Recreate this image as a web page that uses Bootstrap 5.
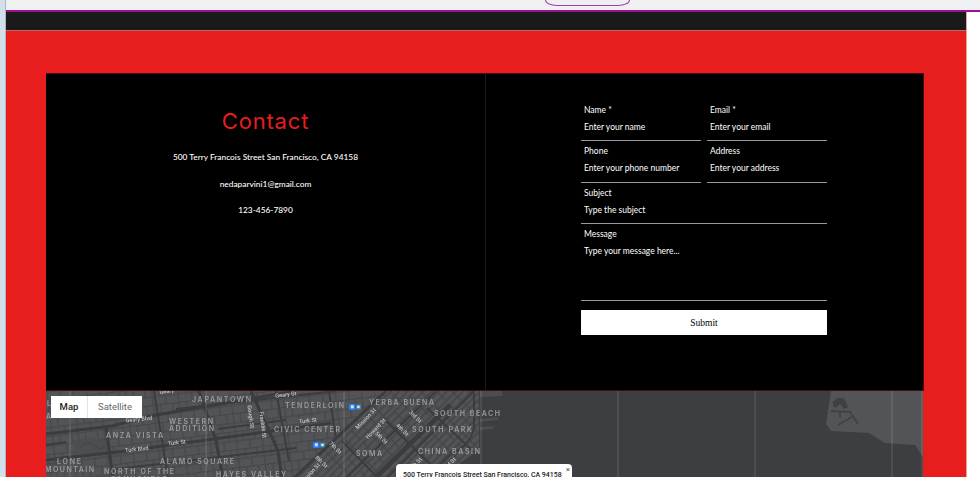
<!DOCTYPE html>
<html lang="en">
<head>
<meta charset="utf-8">
<meta name="viewport" content="width=device-width, initial-scale=1">
<title>Contact</title>
<link href="https://cdn.jsdelivr.net/npm/bootstrap@5.3.0/dist/css/bootstrap.min.css" rel="stylesheet">
<style>
html,body{height:100%;overflow:hidden}
body{font-family:Lato,"Open Sans",sans-serif;font-size:8.5px;line-height:12px;background:#fff;color:#fff}
.shell{height:477px;background:#fff}
.rail{width:6px;background:linear-gradient(90deg,#d3dfea 5px,#b3b5ba 5px)}
.topbar{height:12px;background:#eff0f2;border-bottom:2px solid #9a128f}
.pill{width:85px;height:6px;margin-left:539px;border:1px solid #a63c9f;border-top:0;border-radius:0 0 12px 12px/0 0 6px 6px}
.site{width:961px;background:#e81e1e;border-right:1px solid #f29c9c}
.strip{height:19px;background:#1a1a1a;border-bottom:1px solid #b96b6b}
.panel{width:878px;margin:42px 0 0 40px}
.pane-row{height:318px;background:#000;border:1px solid #500c0c;border-left-width:0}
.info{width:440px;border-right:1px solid #191919}
.info h1{font-family:Inter,sans-serif;font-size:22px;line-height:28px;color:#e81e1e;margin:33px 0 16px;font-weight:400;letter-spacing:.8px}
.info p{margin:0 0 14.5px;font-size:8.35px;font-weight:500}
.contact-form{width:246px;margin:28px 0 0 95px}
.field{height:39.4px;margin-bottom:2px;border-bottom:1px solid #999}
.pair{gap:6px}
.field label{display:block;height:12px;line-height:12px;padding:2px 3px 0}
.field input,.field textarea{display:block;width:100%;height:22px;padding:7px 3px 3px;border:0;border-radius:0;background:transparent;color:#fff;font-size:8.5px;line-height:12px;resize:none;overflow:hidden}
.field ::placeholder{color:#fff;opacity:1}
.message-field{height:75px}
.message-field textarea{height:50px}
.submit{height:25px;margin-top:9px;border-radius:0;background:#fff;color:#000;font:9.5px/26px "Liberation Serif",serif;padding:0;border:0}
.submit:hover{background:#eee}
.map{height:87px;width:877px}
.map svg{display:block}
.district text{font:600 7px Inter,sans-serif;fill:#9b9ca0}
.street text{font:500 5.6px Roboto,sans-serif;fill:#c3c4c7;text-anchor:middle}
.map-type{left:5px;top:5px;height:22px;width:91px;background:#fff;font:9.5px/22px Roboto,sans-serif}
.map-type .kind-map{width:37px;color:#222;font-weight:500;border-right:1px solid #e2e2e2}
.map-type .kind-sat{color:#666}
.bubble{left:350px;top:73px;width:176px;height:26px;border-radius:4px;background:#fff;color:#222;font:500 7px/20px Roboto,sans-serif;white-space:nowrap;padding:1px 7px}
.bubble span{right:2px;top:1px;font:8px/9px Roboto,sans-serif;color:#555}
</style>
<script src="https://cdn.jsdelivr.net/npm/bootstrap@5.3.0/dist/js/bootstrap.bundle.min.js"></script>
</head>
<body>
<div class="shell d-flex">
<div class="rail flex-shrink-0"></div>
<div class="flex-grow-1 d-flex flex-column">
<header class="topbar flex-shrink-0"><div class="pill"></div></header>
<main class="site flex-grow-1">
<div class="strip"></div>
<section class="panel">
<div class="pane-row d-flex">
<div class="info text-center">
<h1>Contact</h1>
<p>500 Terry Francois Street San Francisco, CA 94158</p>
<p>nedaparvini1@gmail.com</p>
<p>123-456-7890</p>
</div>
<form class="contact-form">
<div class="d-flex pair">
<div class="field flex-fill"><label for="n">Name *</label><input id="n" placeholder="Enter your name"></div>
<div class="field flex-fill"><label for="e">Email *</label><input id="e" placeholder="Enter your email"></div>
</div>
<div class="d-flex pair">
<div class="field flex-fill"><label for="p">Phone</label><input id="p" placeholder="Enter your phone number"></div>
<div class="field flex-fill"><label for="a">Address</label><input id="a" placeholder="Enter your address"></div>
</div>
<div class="field"><label for="s">Subject</label><input id="s" placeholder="Type the subject"></div>
<div class="field message-field"><label for="m">Message</label><textarea id="m" placeholder="Type your message here..."></textarea></div>
<button type="button" class="submit btn w-100 d-block">Submit</button>
</form>
</div>
<div class="map position-relative overflow-hidden">
<svg width="877" height="87" viewBox="0 0 877 87">
<defs>
<pattern id="west" width="26" height="18" patternUnits="userSpaceOnUse" patternTransform="rotate(-7)"><rect width="26" height="18" fill="#535458"/><path d="M0 .8H26M0 9.5H26M.8 0V18M14 0V9.5M8 9.5V18M20 9.5V18" stroke="#45464a" stroke-width="1.2"/></pattern>
<pattern id="soma" width="22" height="17" patternUnits="userSpaceOnUse" patternTransform="rotate(-45)"><rect width="22" height="17" fill="#535458"/><path d="M0 1H22M0 6H22M0 12H22M1 0V17M12 6V17" stroke="#434448" stroke-width="1.3"/></pattern>
</defs>
<rect width="877" height="87" fill="#3d3e42"/>
<g style="filter:blur(.5px)">
<path d="M0 0H340L250 87H0Z" fill="url(#west)"/>
<path d="M340 0H433V60L420 68Q408 76 404 87H248Z" fill="url(#soma)"/>
<path d="M434 0H456V5L434 6ZM434 28L453 26 452 29 434 31ZM434 36L448 35 447 38 434 39Z" fill="#4c4d51"/>
<path d="M27 50Q43 43 62 51L60 63 28 65Z" fill="#4d4e52"/>
<path d="M34 57Q40 48 49 55T58 54" fill="none" stroke="#424347"/>
<g fill="none" stroke="#3b3c40">
<path stroke-width="3" d="M0 43L66 35 110 24 220 5 250 0M0 69L80 60 190 45 285 32M60 36L67 87M153 0L170 50 177 87M205 0L232 60 236 87M340 0L248 87"/>
<path stroke-width="2" d="M108 0L122 87M0 54L20 51M70 78L250 57M230 0L243 70M283 0L290 48M130 18L290 0M172 38L240 29M300 87L390 0M341 87L428 0"/>
<path stroke-width="5" d="M329 87L404 14"/>
<path stroke-width="2" d="M428 0V35Q427 52 404 64L380 87M340 30L396 85M381 17L428 61M296 50L332 87"/>
</g>
<path d="M785 0L780 33 785 40 823 42 839 52 869 54 877 66V0Z" fill="#535458"/>
<path d="M787 11L791 7 798 7 802 16 798 18 794 13 790 17 787 15Z" fill="#3f4044"/>
<path d="M785 20L804 21 812 33M794 21V27M806 26L792 34" fill="none" stroke="#414246" stroke-width="1.8"/>
<path d="M24 0V87M160 0V87M298 0V87M435 0V87M572 0V87M709 0V87M846 0V87M876 0V87" stroke="#fff" stroke-opacity=".1" stroke-width="1.7"/>
</g>
<g style="filter:blur(.3px)">
<g class="district">
<text x="146" y="10.5" textLength="59">JAPANTOWN</text><text x="239" y="16.5" textLength="59">TENDERLOIN</text><text x="323" y="14" textLength="65">YERBA BUENA</text><text x="388" y="25" textLength="66">SOUTH BEACH</text><text x="366" y="41" textLength="60">SOUTH PARK</text><text x="228" y="41" textLength="66">CIVIC CENTER</text><text x="310" y="65" textLength="26">SOMA</text><text x="372" y="62.5" textLength="62">CHINA BASIN</text><text x="123" y="32.5" textLength="44">WESTERN</text><text x="123" y="40" textLength="45">ADDITION</text><text x="60" y="46.5" textLength="57">ANZA VISTA</text><text x="11" y="73" textLength="24">LONE</text><text x="-1" y="80.5" textLength="49">MOUNTAIN</text><text x="114" y="73" textLength="74">ALAMO SQUARE</text><text x="58" y="83" textLength="70">NORTH OF THE</text><text x="65" y="91" textLength="56">PANHANDLE</text><text x="170" y="85.5" textLength="70">HAYES VALLEY</text><text x="1" y="15">L</text><text x="0" y="28">A</text>
</g>
<g class="street">
<text transform="translate(93 30) rotate(-6)">Geary Blvd</text><text transform="translate(91 60) rotate(-6)">Turk Blvd</text><text transform="translate(131 53.5) rotate(-7)">Turk St</text><text transform="translate(203 26) rotate(83)">Gough St</text><text transform="translate(215 34) rotate(83)">Franklin St</text><text transform="translate(240 5.5) rotate(-7)">Geary St</text><text transform="translate(121 2) rotate(-7)">Geary</text><text transform="translate(262 31.5) rotate(-7)">Turk St</text><text transform="translate(321 29) rotate(-46)">Mission St</text><text transform="translate(331 39) rotate(-46)">Howard St</text><text transform="translate(380 48) rotate(45)" visibility="hidden"></text><text transform="translate(334 48) rotate(45)">5th St</text><text transform="translate(355 40) rotate(45)">4th St</text><text transform="translate(368 27) rotate(45)">3rd St</text><text transform="translate(288 58) rotate(45)">7th St</text><text transform="translate(274 72) rotate(45)">8th St</text><text transform="translate(265 84) rotate(-46)">Mission St</text><text transform="translate(371 74) rotate(-45)">4th St</text><text transform="translate(405 74) rotate(-45)">3rd St</text>
</g>
<g><rect x="303" y="13" width="6.5" height="6" rx="1" fill="#2c7df0"/><rect x="304.8" y="14.3" width="3" height="3" fill="#cfe3ff"/><rect x="310" y="13.5" width="5" height="5" rx="1" fill="#3d87a8"/><rect x="311.2" y="14.7" width="2.4" height="2.4" fill="#d5f1f4"/></g>
<g transform="translate(-36 38)"><rect x="303" y="13" width="6.5" height="6" rx="1" fill="#2c7df0"/><rect x="304.8" y="14.3" width="3" height="3" fill="#cfe3ff"/><rect x="310" y="13.5" width="5" height="5" rx="1" fill="#3d87a8"/><rect x="311.2" y="14.7" width="2.4" height="2.4" fill="#d5f1f4"/></g>
</g>
</svg>
<div class="map-type position-absolute d-flex text-center"><div class="kind-map">Map</div><div class="kind-sat flex-fill">Satellite</div></div>
<div class="bubble position-absolute">500 Terry Francois Street San Francisco, CA 94158<span class="position-absolute">×</span></div>
</div>
</section>
</main>
</div>
</div>
</body>
</html>
